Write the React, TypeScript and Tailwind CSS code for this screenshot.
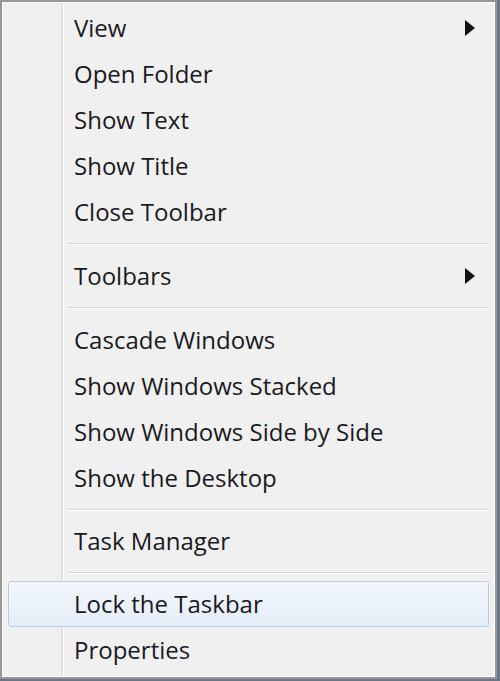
const groups: { label: string; sub?: boolean; active?: boolean }[][] = [
  [
    { label: 'View', sub: true },
    { label: 'Open Folder' },
    { label: 'Show Text' },
    { label: 'Show Title' },
    { label: 'Close Toolbar' },
  ],
  [{ label: 'Toolbars', sub: true }],
  [
    { label: 'Cascade Windows' },
    { label: 'Show Windows Stacked' },
    { label: 'Show Windows Side by Side' },
    { label: 'Show the Desktop' },
  ],
  [{ label: 'Task Manager' }],
  [{ label: 'Lock the Taskbar', active: true }, { label: 'Properties' }],
];

const Arrow = () => (
  <svg width="10" height="16" viewBox="0 0 10 16">
    <path d="M0 0 L10 8 L0 16 Z" fill="#111" />
  </svg>
);

const App = () => {
  return (
    <div className="w-[500px] h-[681px] bg-[#6b7785] overflow-hidden">
      <div className="w-[497px] h-[679px] border-2 border-[#979797]">
        <div className="h-full border border-white bg-[linear-gradient(to_right,#f0f0f0_58px,#dfe0e0_58px,#dfe0e0_60px,#ffffff_60px,#ffffff_61px,#f0f0f0_61px)] pt-[2px] px-[5px]">
          {groups.map((group, gi) => (
            <div key={gi}>
              {gi > 0 && (
                <div className={`${gi < 3 ? 'h-[18px]' : 'h-[17px]'} flex flex-col justify-center ml-[59px] mr-[1px]`}>
                  <div className="h-px bg-[#d7d7d7]" />
                  <div className="h-px bg-white" />
                </div>
              )}
              {group.map((item) => (
                <div
                  key={item.label}
                  className={`h-[46px] flex items-center justify-between pl-[65px] pr-[13px] rounded-[3px] border ${
                    item.active
                      ? 'border-[#b9cde6] bg-[linear-gradient(to_bottom,#f3f7fc,#e4edf8)]'
                      : 'border-transparent'
                  }`}
                >
                  <span
                    className="text-[24px] text-[#1a1a1e] leading-none"
                    style={{ fontFamily: '"Open Sans", "Noto Sans", sans-serif' }}
                  >
                    {item.label}
                  </span>
                  {item.sub && <Arrow />}
                </div>
              ))}
            </div>
          ))}
        </div>
      </div>
    </div>
  );
};

export default App;
